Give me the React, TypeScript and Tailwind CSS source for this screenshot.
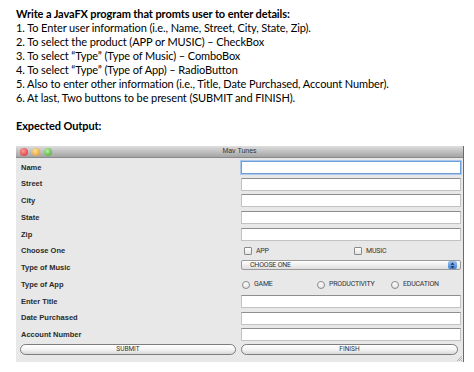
import React from "react";

const labelCls =
  "pl-[5px] text-[7.5px] font-semibold text-[#2a2a2a] leading-none [font-family:'Liberation_Sans',Arial,sans-serif]";
const smallCls = "text-[7px] tracking-[-0.2px] text-[#333] leading-none [font-family:Roboto,Arial,sans-serif]";

function Field({ focused = false }: { focused?: boolean }) {
  return (
    <div
      className={
        focused
          ? "h-[13px] w-[220px] bg-white border border-[#6f9fd8] shadow-[0_0_0_1px_#a9c8ec]"
          : "h-[13px] w-[220px] bg-white border border-[#c2c2c2] border-t-[#8e8e8e]"
      }
    />
  );
}

function Row({
  label,
  children,
  ctl = "items-center",
}: {
  label: string;
  children?: React.ReactNode;
  ctl?: string;
}) {
  return (
    <div className="flex h-[16.75px] items-center">
      <div className={"w-[225px] " + labelCls}>{label}</div>
      <div className={"flex w-[220px] " + ctl}>{children}</div>
    </div>
  );
}

function Check({ label }: { label: string }) {
  return (
    <div className="flex items-center gap-[4px]">
      <div className="h-[8px] w-[8px] border border-[#8a8a8a] bg-gradient-to-b from-white to-[#e4e4e4] rounded-[1px]" />
      <span className={smallCls}>{label}</span>
    </div>
  );
}

function Radio({ label }: { label: string }) {
  return (
    <div className="flex items-center gap-[4px]">
      <div className="h-[8px] w-[8px] rounded-full border border-[#8a8a8a] bg-gradient-to-b from-white to-[#e4e4e4]" />
      <span className={smallCls}>{label}</span>
    </div>
  );
}

function Btn({ label, w }: { label: string; w: string }) {
  return (
    <div
      className={
        w +
        " h-[11px] rounded-full border border-[#7d7d7d] bg-gradient-to-b from-white via-[#f4f4f4] to-[#d9d9d9] flex items-center justify-center text-[6.5px] text-[#333] [font-family:Roboto,Arial,sans-serif]"
      }
    >
      {label}
    </div>
  );
}

export default function App() {
  const lines = [
    "1. To Enter user information (i.e., Name, Street, City, State, Zip).",
    "2. To select the product (APP or MUSIC) \u2013 CheckBox",
    "3. To select \u201cType\u201d (Type of Music) \u2013 ComboBox",
    "4. To select \u201cType\u201d (Type of App) \u2013 RadioButton",
    "5. Also to enter other information (i.e., Title, Date Purchased, Account Number).",
    "6. At last, Two buttons to be present (SUBMIT and FINISH).",
  ];
  return (
    <div className="w-[474px] h-[372px] bg-white overflow-hidden">
      <div className="pl-[16px] pt-[7px] text-[11px] tracking-[-0.1px] leading-[14px] text-black [font-family:Lato,'Noto_Sans',sans-serif]">
        <div className="font-bold">Write a JavaFX program that promts user to enter details:</div>
        {lines.map((l) => (
          <div key={l}>{l}</div>
        ))}
        <div className="h-[14px]" />
        <div className="font-bold">Expected Output:</div>
      </div>
      <div className="ml-[16px] mt-[13px] w-[448px] border-r border-[#6a6a6a]">
        <div className="flex h-[12px] items-center bg-gradient-to-b from-[#dedede] to-[#a4a4a4] border-b border-[#8a8a8a]">
          <div className="flex w-[36px] items-center gap-[4px] pl-[4px]">
            <div className="h-[8px] w-[8px] rounded-full bg-[radial-gradient(circle_at_40%_35%,#ff9a9a,#d52b2b)]" />
            <div className="h-[8px] w-[8px] rounded-full bg-[radial-gradient(circle_at_40%_35%,#ffe19a,#e0901f)]" />
            <div className="h-[8px] w-[8px] rounded-full bg-[radial-gradient(circle_at_40%_35%,#b8f0a0,#3f9f2c)]" />
          </div>
          <div className="flex-1 text-center pr-[36px] text-[7px] text-[#333] [font-family:'Liberation_Sans',Arial,sans-serif]">
            Mav Tunes
          </div>
        </div>
        <div className="relative bg-[#e8e8e8] pt-[1px] pb-[2px]">
          <Row label="Name">
            <Field focused />
          </Row>
          <Row label="Street">
            <Field />
          </Row>
          <Row label="City">
            <Field />
          </Row>
          <Row label="State">
            <Field />
          </Row>
          <Row label="Zip">
            <Field />
          </Row>
          <Row label="Choose One">
            <div className="flex w-full pl-[3px]">
              <div className="w-[110px]">
                <Check label="APP" />
              </div>
              <Check label="MUSIC" />
            </div>
          </Row>
          <Row label="Type of Music" ctl="self-start pt-[0.5px]">
            <div className="flex h-[10px] w-[220px] items-center justify-between rounded-[2px] border border-[#9a9a9a] bg-gradient-to-b from-white to-[#dedede] pl-[8px] pr-[3px]">
              <span className={smallCls}>CHOOSE ONE</span>
              <div className="flex h-[8px] w-[9px] flex-col items-center justify-center rounded-[2px] bg-gradient-to-b from-[#9cc3f0] to-[#3f7fd3]">
                <svg width="5" height="7" viewBox="0 0 5 7">
                  <path d="M2.5 0.5 L4.5 2.8 H0.5 Z M2.5 6.5 L4.5 4.2 H0.5 Z" fill="#1b2f55" />
                </svg>
              </div>
            </div>
          </Row>
          <Row label="Type of App">
            <div className="flex w-full pl-[1px]">
              <div className="w-[75px]">
                <Radio label="GAME" />
              </div>
              <div className="w-[74px]">
                <Radio label="PRODUCTIVITY" />
              </div>
              <Radio label="EDUCATION" />
            </div>
          </Row>
          <Row label="Enter Title">
            <Field />
          </Row>
          <Row label="Date Purchased">
            <Field />
          </Row>
          <Row label="Account Number">
            <Field />
          </Row>
          <div className="flex h-[16.75px] items-start pt-[1px]">
            <div className="w-[225px] pl-[4px]">
              <Btn label="SUBMIT" w="w-[216px]" />
            </div>
            <Btn label="FINISH" w="w-[217px]" />
          </div>
          <svg className="absolute right-[1px] bottom-[1px]" width="6" height="6" viewBox="0 0 6 6">
            <path d="M1 6 L6 1 M3 6 L6 3 M5 6 L6 5" stroke="#9a9a9a" strokeWidth="0.7" />
          </svg>
        </div>
      </div>
    </div>
  );
}
